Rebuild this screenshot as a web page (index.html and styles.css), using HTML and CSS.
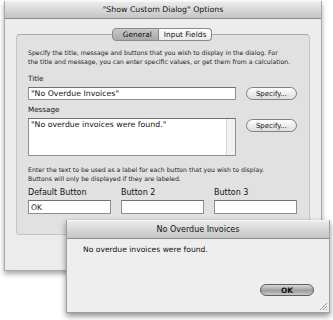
FILE: index.html
```
<html>
<head>
<title>Show Custom Dialog Options</title>
<link rel="stylesheet" href="styles.css">
</head>
<body>

<div class="window">
	<div class="titlebar">"Show Custom Dialog" Options</div>
	<div class="tabs">
		<span class="tab tab_on">General</span><span class="tab">Input Fields</span>
	</div>
	<div class="panel">
		<p class="hint">Specify the title, message and buttons that you wish to display in the dialog. For<br>the title and message, you can enter specific values, or get them from a calculation.</p>

		<div class="label">Title</div>
		<div class="row">
			<div class="field wide">"No Overdue Invoices"</div>
			<div class="pill">Specify...</div>
		</div>

		<div class="label">Message</div>
		<div class="row">
			<div class="field wide area">"No overdue invoices were found."<div class="scroll"></div></div>
			<div class="pill">Specify...</div>
		</div>

		<p class="hint hint2">Enter the text to be used as a label for each button that you wish to display.<br>Buttons will only be displayed if they are labeled.</p>

		<div class="buttons">
			<div class="col">
				<div class="biglabel">Default Button</div>
				<div class="field small">OK</div>
			</div>
			<div class="col">
				<div class="biglabel">Button 2</div>
				<div class="field small"></div>
			</div>
			<div class="col">
				<div class="biglabel">Button 3</div>
				<div class="field small"></div>
			</div>
		</div>
	</div>
</div>

<div class="alert">
	<div class="titlebar alert_title">No Overdue Invoices</div>
	<div class="alert_body">
		<p class="alert_text">No overdue invoices were found.</p>
		<div class="okrow"><div class="okbtn">OK</div></div>
	</div>
	<svg class="grip" width="9" height="9" viewBox="0 0 9 9">
		<path d="M8 1 L1 8 M8 4 L4 8 M8 7 L7 8" stroke="#9a9a9a" stroke-width="1"/>
	</svg>
</div>

</body>
</html>
```

FILE: styles.css
```
body { margin: 0; background-color: white; font-family: "DejaVu Sans", sans-serif; color: #111; }

.window {
	margin: 1px 0 0 4px;
	width: 318px;
	background-color: #ececec;
	border: 1px solid #a8a8a8;
	border-top: none;
	box-sizing: border-box;
	padding-bottom: 35px;
	box-shadow: 0px 3px 5px rgba(0,0,0,0.35);
}
.titlebar {
	height: 16px;
	line-height: 16px;
	text-align: center;
	font-size: 7.8px;
	background: linear-gradient(#ebebeb, #c4c4c4);
	border-bottom: 1px solid #8c8c8c;
	border-top: 1px solid #f6f6f6;
	border-radius: 3px 3px 0 0;
}

.tabs {
	position: relative;
	z-index: 2;
	display: flex;
	justify-content: center;
	margin-top: 9px;
	margin-left: -2px;
}
.tab {
	height: 11px;
	line-height: 11px;
	font-size: 7.4px;
	padding: 0 5px;
	background: linear-gradient(#ffffff, #e9e9e9);
	border: 1px solid #8a8a8a;
	border-left: none;
	border-radius: 0 4px 4px 0;
}
.tab_on {
	background: linear-gradient(#c9c9c9, #a9a9a9);
	border-left: 1px solid #8a8a8a;
	border-radius: 4px 0 0 4px;
	padding: 0 6px 0 10px;
}

.panel {
	margin: -7px 11px 0 11px;
	background-color: #e1e1e1;
	border: 1px solid #c4c4c4;
	border-top-color: #a9a9a9;
	border-radius: 4px;
	padding: 13px 0 20px 11px;
}
.hint { margin: 0; font-size: 6.2px; line-height: 9px; white-space: nowrap; color: #222; }
.hint2 { margin-top: 9px; }

.label { font-size: 7.2px; line-height: 10px; margin-top: 8px; }
.row { display: flex; align-items: flex-start; margin-top: 3px; }
.row + .label { margin-top: 5px; }

.field {
	background-color: white;
	border: 1px solid #8f8f8f;
	border-top-color: #6f6f6f;
	box-sizing: border-box;
	font-size: 7.8px;
	padding: 0 2px;
	height: 13px;
	line-height: 12px;
}
.wide { width: 208px; }
.area { height: 38px; position: relative; }
.scroll {
	position: absolute; right: 0; top: 0; bottom: 0; width: 8px;
	background-color: #f2f2f2; border-left: 1px solid #d4d4d4;
}

.pill {
	margin: 0 0 0 10px;
	width: 51px;
	height: 13px;
	line-height: 12px;
	box-sizing: border-box;
	text-align: center;
	font-size: 7px;
	border: 1px solid #7f7f7f;
	border-radius: 7px;
	background: linear-gradient(#fdfdfd, #dedede);
}
.area + .pill { margin-top: 1px; }

.buttons { display: flex; margin-top: 4px; }
.col { margin-right: 10px; }
.biglabel { font-size: 8px; line-height: 11px; margin-bottom: 2px; }
.small { width: 83px; height: 14px; line-height: 13px; font-size: 7.6px; }

.alert {
	position: absolute;
	left: 66px;
	top: 220px;
	width: 264px;
	height: 93px;
	background-color: #eeeeee;
	border: 1px solid #a0a0a0;
	border-top: none;
	box-sizing: border-box;
	box-shadow: 0px 3px 6px rgba(0,0,0,0.45);
}
.alert_title { height: 17px; line-height: 17px; font-size: 8px; border-radius: 2px 2px 0 0; }
.alert_text { margin: 6px 0 0 16px; font-size: 7.6px; line-height: 10px; }
.okrow { display: flex; justify-content: flex-end; margin-top: 29px; padding-right: 15px; }
.okbtn {
	width: 54px;
	height: 12px;
	line-height: 11px;
	box-sizing: border-box;
	text-align: center;
	font-size: 7.4px;
	font-weight: bold;
	border: 1px solid #5e5e5e;
	border-radius: 7px;
	background: linear-gradient(#d8d8d8, #9e9e9e 55%, #c8c8c8);
}
.grip { position: absolute; right: 1px; bottom: 1px; }
```
